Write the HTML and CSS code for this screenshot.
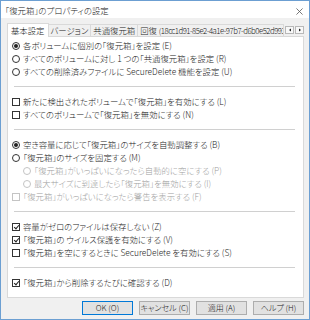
FILE: index.html
```html
<!DOCTYPE html>
<html>
  <head>
    <meta charset="utf-8" />
    <link rel="stylesheet" href="styles.css">
  </head>
  <body>
    <div class="window">
      <div class="title-bar">
        <div class="title-text">「復元箱」のプロパティの設定</div>
        <svg class="title-close" viewBox="0 0 8 8">
          <path d="M0.5 0.5L7.5 7.5M7.5 0.5L0.5 7.5" />
        </svg>
      </div>

      <div class="tabs">
        <div class="tab active">基本設定</div>
        <div class="tab">バージョン</div>
        <div class="tab">共通復元箱</div>
        <div class="tab tab-long">回復 <span class="guid">(18cc1d91-85e2-4a1e-97b7-d6b0e52d9938</span></div>
        <div class="tab-scroll">
          <span class="scroll-btn">
            <svg viewBox="0 0 4 4"><path d="M3 0.5L1 2L3 3.5Z" /></svg>
          </span>
          <span class="scroll-btn">
            <svg viewBox="0 0 4 4"><path d="M1 0.5L3 2L1 3.5Z" /></svg>
          </span>
        </div>
      </div>

      <div class="panel">
        <div class="group">
          <div class="row"><span class="radio on"></span>各ボリュームに個別の「復元箱」を設定 (E)</div>
          <div class="row"><span class="radio"></span>すべてのボリュームに対し 1 つの「共通復元箱」を設定 (R)</div>
          <div class="row"><span class="radio"></span>すべての削除済みファイルに SecureDelete 機能を設定 (U)</div>
        </div>
        <div class="sep"></div>
        <div class="group">
          <div class="row"><span class="check"></span>新たに検出されたボリュームで「復元箱」を有効にする (L)</div>
          <div class="row"><span class="check"></span>すべてのボリュームで「復元箱」を無効にする (N)</div>
        </div>
        <div class="sep"></div>
        <div class="group">
          <div class="row"><span class="radio on"></span>空き容量に応じて「復元箱」のサイズを自動調整する (B)</div>
          <div class="row"><span class="radio"></span>「復元箱」のサイズを固定する (M)</div>
          <div class="row sub disabled"><span class="radio"></span>「復元箱」がいっぱいになったら自動的に空にする (P)</div>
          <div class="row sub disabled"><span class="radio"></span>最大サイズに到達したら「復元箱」を無効にする (I)</div>
          <div class="row disabled"><span class="check"></span>「復元箱」がいっぱいになったら警告を表示する (F)</div>
        </div>
        <div class="sep"></div>
        <div class="group">
          <div class="row"><span class="check on"></span>容量がゼロのファイルは保存しない (Z)</div>
          <div class="row"><span class="check on"></span>「復元箱」の ウイルス保護を有効にする (V)</div>
          <div class="row"><span class="check"></span>「復元箱」を空にするときに SecureDelete を有効にする (S)</div>
        </div>
        <div class="sep"></div>
        <div class="group">
          <div class="row"><span class="check on"></span>「復元箱」から削除するたびに確認する (D)</div>
        </div>
      </div>

      <div class="buttons">
        <div class="btn default">OK (O)</div>
        <div class="btn">キャンセル (C)</div>
        <div class="btn">適用 (A)</div>
        <div class="btn">ヘルプ (H)</div>
      </div>
    </div>
  </body>
</html>
```

FILE: styles.css
```css
* {
  margin: 0;
  padding: 0;
  box-sizing: border-box;
}

body {
  width: 310px;
  height: 320px;
  overflow: hidden;
  background: #ffffff;
  font-family: "Noto Sans CJK JP", "Noto Sans", sans-serif;
  font-feature-settings: "palt";
  font-weight: 300;
  font-size: 8.4px;
  color: #1a1a1a;
}

.window {
  width: 310px;
  height: 320px;
  border: 1px solid #6c9fd2;
  background: #f0f0f0;
  display: flex;
  flex-direction: column;
}

.title-bar {
  height: 17px;
  flex: none;
  background: #ffffff;
  display: flex;
  align-items: center;
  justify-content: space-between;
  padding: 0 6px 0 4px;
}

.title-text {
  font-size: 8.4px;
  color: #222;
}

.title-close {
  width: 7px;
  height: 7px;
  margin-top: 4px;
  fill: none;
  stroke: #555;
  stroke-width: 0.9;
}

.tabs {
  display: flex;
  align-items: flex-end;
  height: 13px;
  flex: none;
  margin: 5px 5px 0 6px;
}

.tab {
  height: 12px;
  padding: 0 2px;
  border: 1px solid #d9d9d9;
  border-bottom: none;
  background: #f0f0f0;
  line-height: 11px;
  white-space: nowrap;
  margin-left: -1px;
}

.tab.active {
  height: 14px;
  background: #ffffff;
  margin-left: 0;
  margin-bottom: -1px;
  position: relative;
  z-index: 2;
  padding: 0 3px;
  line-height: 12px;
}

.tab-long {
  flex: 1;
  overflow: hidden;
}

.guid {
  font-size: 7.8px;
  letter-spacing: -0.5px;
}

.tab-scroll {
  display: flex;
  gap: 1px;
  margin-left: 1px;
  margin-bottom: 2px;
  flex: none;
}

.scroll-btn {
  width: 9px;
  height: 8px;
  border: 1px solid #b8b8b8;
  background: #f8f8f8;
  display: flex;
  align-items: center;
  justify-content: center;
}

.scroll-btn svg {
  width: 4px;
  height: 4px;
  fill: #222;
}

.panel {
  height: 262px;
  flex: none;
  margin: 0 5px 0 6px;
  background: #ffffff;
  border: 1px solid #d9d9d9;
  padding: 2px 0 0 4px;
  display: flex;
  flex-direction: column;
}

.group {
  display: flex;
  flex-direction: column;
}

.row {
  height: 13px;
  display: flex;
  align-items: center;
  white-space: nowrap;
  line-height: 13px;
}

.row.sub {
  padding-left: 11px;
}

.row.disabled {
  color: #a0a0a0;
}

.radio {
  width: 8px;
  height: 8px;
  border: 1px solid #333;
  border-radius: 50%;
  margin-right: 3px;
  flex: none;
  display: flex;
  align-items: center;
  justify-content: center;
}

.radio.on::after {
  content: "";
  width: 4px;
  height: 4px;
  border-radius: 50%;
  background: #222;
}

.check {
  width: 8px;
  height: 8px;
  border: 1px solid #333;
  margin-right: 3px;
  flex: none;
  position: relative;
}

.check.on::after {
  content: "";
  position: absolute;
  left: 2px;
  top: 0;
  width: 2px;
  height: 4px;
  border: solid #222;
  border-width: 0 1px 1px 0;
  transform: rotate(40deg);
}

.disabled .radio,
.disabled .check {
  border-color: #c4c4c4;
}

.sep {
  height: 1px;
  background: #d0d0d0;
  margin: 8px 8px 8px 2px;
}

.buttons {
  display: flex;
  justify-content: flex-end;
  gap: 6px;
  padding: 3px 5px 0 0;
}

.btn {
  width: 51px;
  height: 14px;
  border: 1px solid #adadad;
  background: #e1e1e1;
  font-size: 8px;
  line-height: 12px;
  text-align: center;
  color: #222;
}

.btn.default {
  border-color: #0078d7;
}
```
